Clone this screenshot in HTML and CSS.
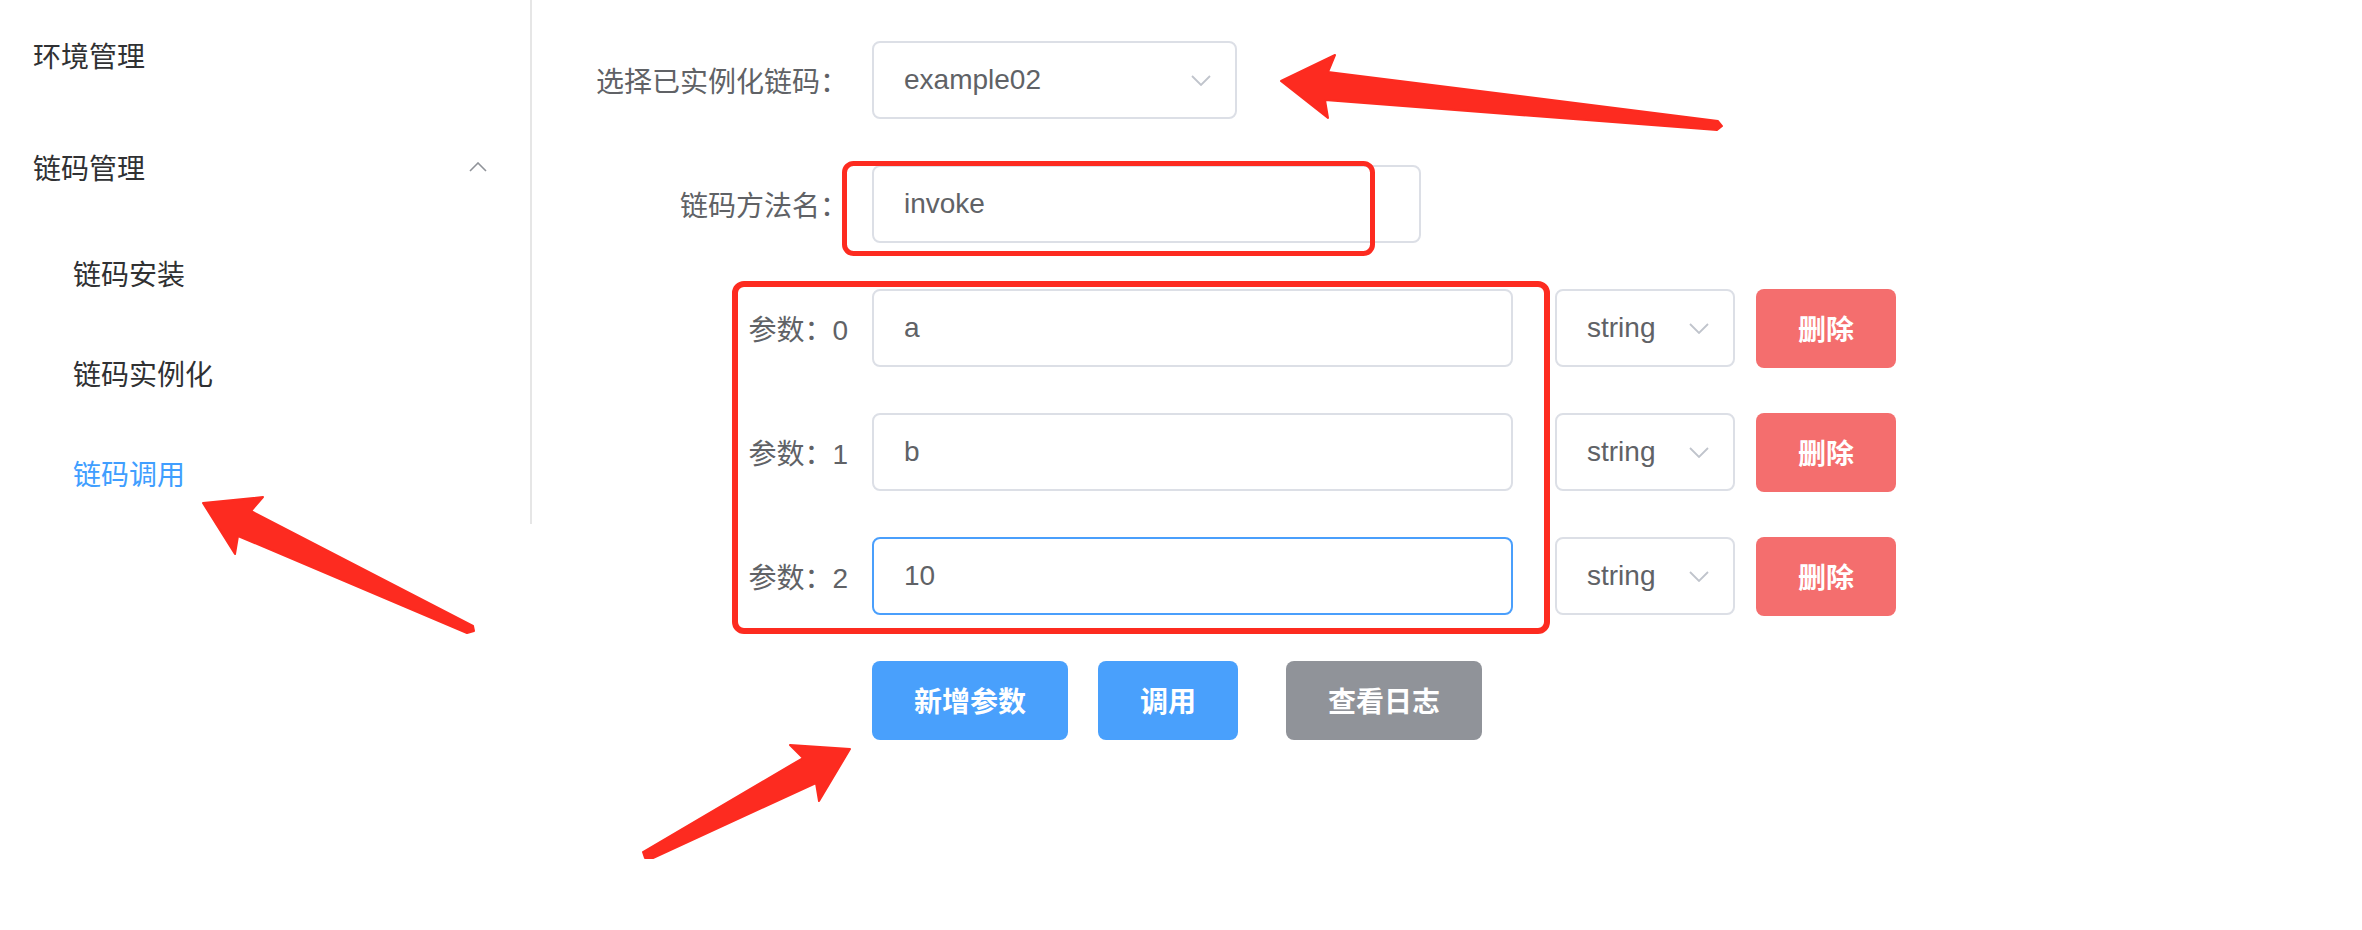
FILE: index.html
```html
<!DOCTYPE html>
<html lang="zh-CN">
<head>
<meta charset="utf-8">
<title>链码调用</title>
<link rel="stylesheet" href="styles.css">
</head>
<body>
<div class="page">
  <aside class="sidebar">
    <ul class="menu">
      <li class="menu-item">环境管理</li>
      <li class="submenu">
        <div class="submenu-title">
          <span>链码管理</span>
          <svg class="arrow-up" viewBox="0 0 18 10" width="18" height="10"><polyline points="1,9 9,1 17,9"/></svg>
        </div>
        <ul class="submenu-list">
          <li class="sub-item">链码安装</li>
          <li class="sub-item">链码实例化</li>
          <li class="sub-item active">链码调用</li>
        </ul>
      </li>
    </ul>
  </aside>

  <main class="main">
    <form class="form">
      <div class="form-row">
        <label class="form-label">选择已实例化链码：</label>
        <div class="field select chaincode-select">
          <span class="field-value">example02</span>
          <svg class="chevron" viewBox="0 0 20 11" width="20" height="11"><polyline points="1,1 10,10 19,1"/></svg>
        </div>
      </div>

      <div class="form-row">
        <label class="form-label">链码方法名：</label>
        <div class="field method-input"><span class="field-value">invoke</span></div>
      </div>

      <div class="form-row">
        <label class="form-label">参数：0</label>
        <div class="field param-input"><span class="field-value">a</span></div>
        <div class="field select type-select">
          <span class="field-value">string</span>
          <svg class="chevron" viewBox="0 0 20 11" width="20" height="11"><polyline points="1,1 10,10 19,1"/></svg>
        </div>
        <button type="button" class="btn btn-danger btn-delete">删除</button>
      </div>

      <div class="form-row">
        <label class="form-label">参数：1</label>
        <div class="field param-input"><span class="field-value">b</span></div>
        <div class="field select type-select">
          <span class="field-value">string</span>
          <svg class="chevron" viewBox="0 0 20 11" width="20" height="11"><polyline points="1,1 10,10 19,1"/></svg>
        </div>
        <button type="button" class="btn btn-danger btn-delete">删除</button>
      </div>

      <div class="form-row">
        <label class="form-label">参数：2</label>
        <div class="field param-input is-focus"><span class="field-value">10</span></div>
        <div class="field select type-select">
          <span class="field-value">string</span>
          <svg class="chevron" viewBox="0 0 20 11" width="20" height="11"><polyline points="1,1 10,10 19,1"/></svg>
        </div>
        <button type="button" class="btn btn-danger btn-delete">删除</button>
      </div>

      <div class="form-row actions">
        <div class="label-spacer"></div>
        <button type="button" class="btn btn-primary btn-add">新增参数</button>
        <button type="button" class="btn btn-primary btn-invoke">调用</button>
        <button type="button" class="btn btn-info btn-log">查看日志</button>
      </div>
    </form>
  </main>

  <svg class="annotations" width="2362" height="930" viewBox="0 0 2362 930">
    <rect class="mark" x="844.5" y="163.5" width="528" height="90" rx="9" stroke-width="5"/>
    <rect class="mark" x="735" y="284" width="812" height="347" rx="9" stroke-width="6"/>
    <polygon class="arrow" points="1281,81 1335,55 1328,72 1718,121 1722,126 1717,130 1325,100 1328,118"/>
    <polygon class="arrow" points="203,503 263,497 251,511 473,626 474,631 467,633 238,536 235,554"/>
    <polygon class="arrow" points="850,749 790,745 803,758 643,852 645,858 653,858 816,783 819,801"/>
  </svg>
</div>
</body>
</html>
```

FILE: styles.css
```css
* {
  box-sizing: border-box;
}

html,
body {
  margin: 0;
  padding: 0;
  background: #ffffff;
}

body {
  font-family: "Liberation Sans", "Noto Sans CJK SC", sans-serif;
  width: 2362px;
  height: 930px;
  overflow: hidden;
}

.page {
  position: relative;
  display: flex;
  align-items: flex-start;
  width: 2362px;
  height: 930px;
}

/* ---------- sidebar menu ---------- */
.sidebar {
  flex: none;
  width: 532px;
  border-right: 2px solid #e6e6e6;
}

.menu,
.submenu-list {
  list-style: none;
  margin: 0;
  padding: 0;
}

.menu-item,
.submenu-title {
  height: 112px;
  display: flex;
  align-items: center;
  padding-left: 33px;
  padding-bottom: 2px;
  font-size: 28px;
  color: #303133;
}

.submenu-title {
  justify-content: space-between;
  padding-right: 43px;
}

.arrow-up {
  fill: none;
  stroke: #909399;
  stroke-width: 1.6;
}

.sub-item {
  height: 100px;
  display: flex;
  align-items: center;
  padding-left: 73px;
  padding-bottom: 2px;
  font-size: 28px;
  color: #303133;
}

.sub-item.active {
  color: #409eff;
}

/* ---------- main form ---------- */
.main {
  flex: 1;
  padding: 41px 0 0 60px;
}

.form {
  margin: 0;
}

.form-row {
  display: flex;
  align-items: center;
  height: 78px;
  margin-bottom: 46px;
}

.form-label,
.label-spacer {
  flex: none;
  width: 280px;
}

.form-label {
  text-align: right;
  padding-right: 24px;
  font-size: 28px;
  color: #606266;
}

.field {
  flex: none;
  display: flex;
  align-items: center;
  height: 78px;
  padding: 0 30px;
  border: 2px solid #dcdfe6;
  border-radius: 8px;
  background: #ffffff;
  font-size: 28px;
  color: #606266;
}

.field.is-focus {
  border-color: #4a9ffc;
}

.field-value {
  flex: 1;
  white-space: nowrap;
}

.select {
  padding-right: 24px;
}

.chevron {
  flex: none;
  fill: none;
  stroke: #c0c4cc;
  stroke-width: 1.8;
}

.chaincode-select {
  width: 365px;
}

.method-input {
  width: 549px;
}

.param-input {
  width: 641px;
  margin-right: 42px;
}

.type-select {
  width: 180px;
  margin-right: 21px;
}

/* ---------- buttons ---------- */
.btn {
  flex: none;
  height: 79px;
  border: none;
  border-radius: 8px;
  padding: 0;
  font-family: "Liberation Sans", "Noto Sans CJK SC", sans-serif;
  font-size: 28px;
  font-weight: 700;
  color: #ffffff;
  cursor: pointer;
}

.btn-danger {
  background: #f46e6e;
}

.btn-primary {
  background: #49a0fc;
}

.btn-info {
  background: #909399;
}

.btn-delete {
  width: 140px;
}

.btn-add {
  width: 196px;
  margin-right: 30px;
}

.btn-invoke {
  width: 140px;
  margin-right: 48px;
}

.btn-log {
  width: 196px;
}

/* ---------- annotation overlay ---------- */
.annotations {
  position: absolute;
  top: 0;
  left: 0;
  pointer-events: none;
}

.mark {
  fill: none;
  stroke: #fd2b20;
}

.arrow {
  fill: #fd2b20;
  stroke: #fd2b20;
  stroke-width: 2;
  stroke-linejoin: round;
}
```
